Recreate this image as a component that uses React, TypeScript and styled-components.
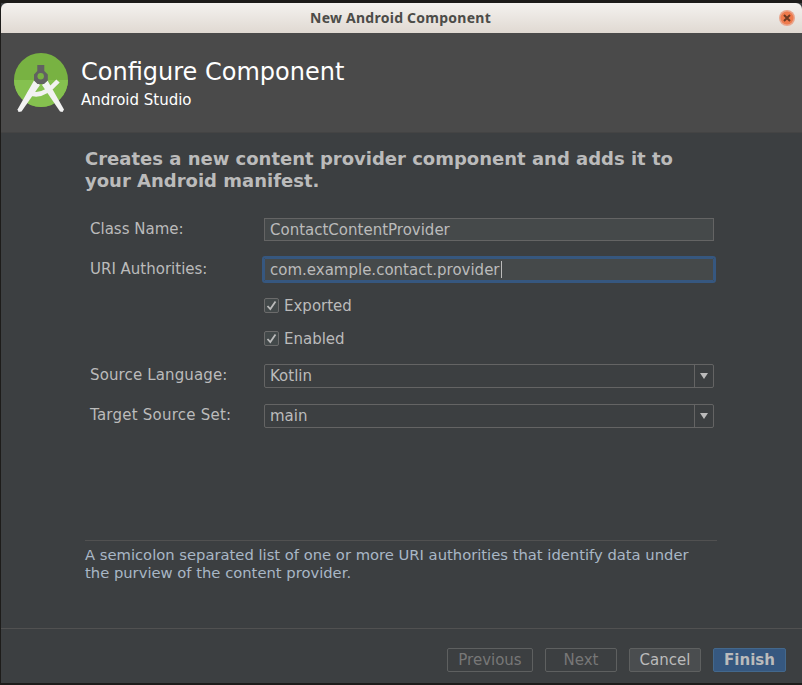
import styled, { createGlobalStyle } from "styled-components";

const GlobalStyle = createGlobalStyle`
  html, body {
    margin: 0;
    padding: 0;
    background: #1d1c1a;
  }
  body {
    font-family: "DejaVu Sans", sans-serif;
  }
`;

const Page = styled.div`
  width: 802px;
  height: 685px;
  padding: 3px 0 2px 1px;
  box-sizing: border-box;
  overflow: hidden;
`;

const Window = styled.div`
  width: 801px;
  height: 680px;
  display: flex;
  flex-direction: column;
  background: #3c3f41;
`;

const TitleBar = styled.div`
  height: 30px;
  flex: none;
  box-sizing: border-box;
  padding: 0 2px 2px 0;
  display: flex;
  align-items: center;
  justify-content: center;
  position: relative;
  border-radius: 6px 6px 0 0;
  background: linear-gradient(#f4f2ef, #e0d9d2);
  color: #4c4c48;
  font: bold 14px "Noto Sans", sans-serif;
  letter-spacing: 0.25px;
`;

const CloseButton = styled.svg`
  position: absolute;
  right: 7px;
  top: 7px;
`;

const Header = styled.header`
  height: 100px;
  flex: none;
  display: flex;
  align-items: flex-start;
  gap: 13px;
  padding: 20px 0 0 13px;
  box-sizing: border-box;
  background: #4a4a4a;
  border-bottom: 1px solid #444;
`;

const Logo = styled.svg`
  flex: none;
`;

const HeaderText = styled.div`
  display: flex;
  flex-direction: column;
  gap: 6px;
  padding-top: 5px;
  color: #fff;
`;

const HeaderTitle = styled.div`
  font-size: 24px;
  line-height: 28px;
`;

const HeaderSubtitle = styled.div`
  font-size: 15px;
  line-height: 17px;
`;

const Body = styled.main`
  flex: 1;
  display: flex;
  flex-direction: column;
  padding: 15px 84px 0;
`;

const Heading = styled.h1`
  margin: 0;
  width: 620px;
  font-size: 18px;
  line-height: 22px;
  font-weight: bold;
  color: #bbbbbb;
`;

const Form = styled.div`
  margin: 26px 0 0 5px;
  display: grid;
  grid-template-columns: 174px 450px;
  align-items: center;
`;

const Label = styled.label<{ $gap?: number; $tracking?: number }>`
  font-size: 15px;
  line-height: 17px;
  color: #bbbbbb;
  letter-spacing: ${(p) => p.$tracking ?? 0}px;
  margin-bottom: ${(p) => p.$gap ?? 0}px;
`;

const Field = styled.div<{ $focused?: boolean; $gap?: number }>`
  height: 23px;
  box-sizing: border-box;
  display: flex;
  align-items: center;
  padding-left: 5px;
  background: #45494a;
  color: #bbbbbb;
  font-size: 15px;
  border: 1px solid #646464;
  margin-bottom: ${(p) => p.$gap ?? 0}px;
  ${(p) =>
    p.$focused &&
    `
    outline: 2px solid #36577f;
    outline-offset: 0;
    border-color: #36577f;
    border-radius: 1px;
  `}
`;

const Caret = styled.span`
  display: inline-block;
  width: 1px;
  height: 17px;
  margin-left: 1px;
  background: #bbbbbb;
`;

const CheckRow = styled.div<{ $gap: number }>`
  grid-column: 2;
  display: flex;
  align-items: center;
  gap: 5px;
  height: 17px;
  margin-bottom: ${(p) => p.$gap}px;
  font-size: 15px;
  color: #bbbbbb;
`;

const CheckBox = styled.span`
  width: 15px;
  height: 15px;
  box-sizing: border-box;
  border: 1px solid #6b6b6b;
  border-radius: 2px;
  background: #43494a;
  display: flex;
  align-items: center;
  justify-content: center;
`;

const Select = styled.div<{ $gap?: number }>`
  height: 24px;
  box-sizing: border-box;
  display: flex;
  align-items: center;
  background: #3c3f41;
  border: 1px solid #646464;
  border-radius: 2px;
  color: #bbbbbb;
  font-size: 15px;
  margin-bottom: ${(p) => p.$gap ?? 0}px;
`;

const SelectValue = styled.div`
  flex: 1;
  padding-left: 5px;
`;

const SelectArrow = styled.div`
  width: 19px;
  height: 100%;
  box-sizing: border-box;
  border-left: 1px solid #646464;
  display: flex;
  align-items: center;
  justify-content: center;
`;

const Triangle = styled.span`
  width: 0;
  height: 0;
  border-left: 4px solid transparent;
  border-right: 4px solid transparent;
  border-top: 6px solid #bbbbbb;
`;

const HelpBox = styled.div`
  margin-top: auto;
  width: 632px;
  height: 88px;
  box-sizing: border-box;
  border-top: 1px solid #515151;
  padding-top: 5px;
  font-size: 14.75px;
  line-height: 18px;
  color: #a9b7c6;
`;

const Footer = styled.footer`
  height: 55px;
  flex: none;
  box-sizing: border-box;
  border-top: 1px solid #515151;
  padding: 19px 16px 0 0;
  display: flex;
  justify-content: flex-end;
  gap: 12px;
`;

const Button = styled.button<{ $variant?: "disabled" | "primary"; $width: number }>`
  width: ${(p) => p.$width}px;
  height: 24px;
  padding: 0;
  box-sizing: border-box;
  border-radius: 2px;
  font-family: inherit;
  font-size: 15px;
  font-weight: ${(p) => (p.$variant === "primary" ? "bold" : "normal")};
  color: ${(p) => (p.$variant === "disabled" ? "#777777" : "#bbbbbb")};
  background: ${(p) =>
    p.$variant === "primary"
      ? "#365880"
      : p.$variant === "disabled"
        ? "#3c3f41"
        : "#4a4d4f"};
  border: 1px solid ${(p) => (p.$variant === "primary" ? "#43688c" : "#5e6060")};
`;

function StudioLogo() {
  return (
    <Logo width="54" height="60" viewBox="0 0 54 60">
      <circle cx="27" cy="27" r="27" fill="#78b242" />
      <path d="M0 27a27 27 0 0 0 54 0z" fill="#85c14f" />
      <path d="M14 39Q27 47 44 28" fill="none" stroke="#f2f2f2" strokeWidth="4.500" />
      <path d="M20 27.500 26 32 7.500 58.500 4.500 59 3.500 56.500z" fill="#f2f2f2" />
      <path d="M33.500 27.500 28 32 46 58.500 48.500 59 50 56.500z" fill="#f2f2f2" />
      <path d="M23.300 12h7v6l3.500 3.500v6L30 31h-6.500l-3.500-3.500v-6l3.300-3.500z" fill="#616161" />
      <circle cx="26.700" cy="23.300" r="3.200" fill="#78b242" />
    </Logo>
  );
}

function Tick() {
  return (
    <svg width="11" height="11" viewBox="0 0 11 11">
      <path d="M1.500 6 4.300 9 9.500 1.500" fill="none" stroke="#bbbbbb" strokeWidth="1.800" />
    </svg>
  );
}

export default function App() {
  return (
    <Page>
      <GlobalStyle />
      <Window>
        <TitleBar>
          New Android Component
          <CloseButton width="16" height="16" viewBox="0 0 16 16">
            <circle cx="8" cy="8" r="8" fill="#e9a58c" />
            <circle cx="8" cy="8" r="6.500" fill="#ef7a4c" />
            <path d="M5 5l6 6M11 5l-6 6" stroke="#6e3a22" strokeWidth="2" />
          </CloseButton>
        </TitleBar>
        <Header>
          <StudioLogo />
          <HeaderText>
            <HeaderTitle>Configure Component</HeaderTitle>
            <HeaderSubtitle>Android Studio</HeaderSubtitle>
          </HeaderText>
        </Header>
        <Body>
          <Heading>
            Creates a new content provider component and adds it to your Android manifest.
          </Heading>
          <Form>
            <Label $gap={17}>Class Name:</Label>
            <Field $gap={17}>ContactContentProvider</Field>
            <Label $gap={16}>URI Authorities:</Label>
            <Field $focused $gap={16}>
              com.example.contact.provider
              <Caret />
            </Field>
            <CheckRow $gap={16}>
              <CheckBox>
                <Tick />
              </CheckBox>
              Exported
            </CheckRow>
            <CheckRow $gap={17}>
              <CheckBox>
                <Tick />
              </CheckBox>
              Enabled
            </CheckRow>
            <Label $gap={18} $tracking={0.13}>Source Language:</Label>
            <Select $gap={16}>
              <SelectValue>Kotlin</SelectValue>
              <SelectArrow>
                <Triangle />
              </SelectArrow>
            </Select>
            <Label $gap={2} $tracking={0.23}>Target Source Set:</Label>
            <Select>
              <SelectValue>main</SelectValue>
              <SelectArrow>
                <Triangle />
              </SelectArrow>
            </Select>
          </Form>
          <HelpBox>
            A semicolon separated list of one or more URI authorities that identify data under
            the purview of the content provider.
          </HelpBox>
        </Body>
        <Footer>
          <Button $variant="disabled" $width={86}>Previous</Button>
          <Button $variant="disabled" $width={72}>Next</Button>
          <Button $width={72}>Cancel</Button>
          <Button $variant="primary" $width={73}>Finish</Button>
        </Footer>
      </Window>
    </Page>
  );
}
